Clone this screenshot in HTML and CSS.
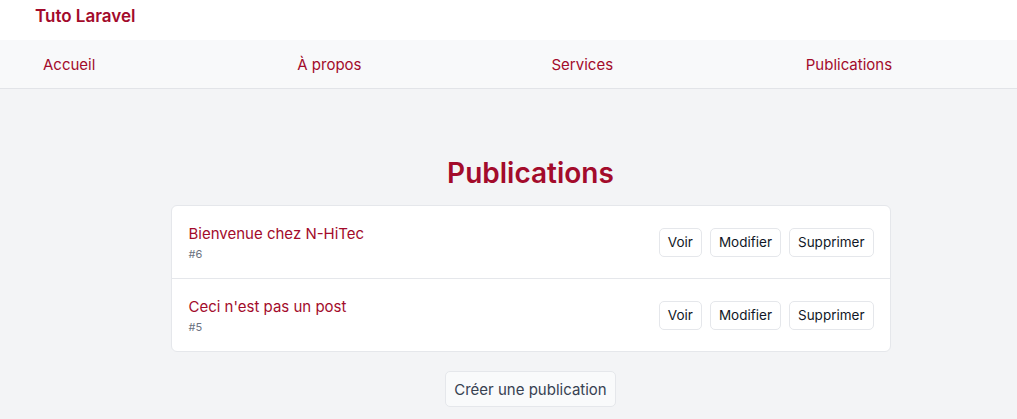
FILE: index.html
```html
<!DOCTYPE html>
<html lang="fr">
<head>
<meta charset="utf-8">
<title>Publications</title>
<link rel="stylesheet" href="styles.css">
</head>
<body>
<header class="brand-bar">
  <a class="brand" href="#">Tuto Laravel</a>
</header>
<nav class="nav">
  <div class="nav-item"><a href="#">Accueil</a></div>
  <div class="nav-item"><a href="#">À propos</a></div>
  <div class="nav-item"><a href="#">Services</a></div>
  <div class="nav-item"><a href="#">Publications</a></div>
</nav>
<main class="main">
  <h1 class="title">Publications</h1>
  <ul class="card">
    <li class="row">
      <div class="row-info">
        <a class="row-title" href="#">Bienvenue chez N-HiTec</a>
        <span class="row-id">#6</span>
      </div>
      <div class="actions">
        <button class="btn">Voir</button>
        <button class="btn">Modifier</button>
        <button class="btn">Supprimer</button>
      </div>
    </li>
    <li class="row">
      <div class="row-info">
        <a class="row-title" href="#">Ceci n'est pas un post</a>
        <span class="row-id">#5</span>
      </div>
      <div class="actions">
        <button class="btn">Voir</button>
        <button class="btn">Modifier</button>
        <button class="btn">Supprimer</button>
      </div>
    </li>
  </ul>
  <button class="create">Créer une publication</button>
</main>
</body>
</html>
```

FILE: styles.css
```css
* { box-sizing: border-box; }
html, body { margin: 0; padding: 0; }
body {
  font-family: Inter, "Noto Sans", sans-serif;
  background: #f3f4f6;
  color: #111827;
  min-height: 419px;
}
a { text-decoration: none; }
.brand-bar {
  background: #ffffff;
  height: 40px;
  padding-left: 35px;
  display: flex;
  align-items: center;
}
.brand {
  color: #a30b2b;
  font-weight: 600;
  font-size: 17px;
  margin-top: -9px;
}
.nav {
  display: grid;
  grid-template-columns: repeat(4, 1fr);
  height: 49px;
  background: #f8f9fa;
  border-bottom: 1px solid #e2e4e8;
  align-items: center;
}
.nav-item { padding-left: 43px; }
.nav-item a {
  color: #a30b2b;
  font-size: 15px;
}
.main {
  padding-left: 44px;
  padding-top: 67px;
  display: flex;
  flex-direction: column;
  align-items: center;
}
.title {
  margin: 0;
  color: #a30b2b;
  font-size: 28px;
  font-weight: 600;
  line-height: 34px;
}
.card {
  list-style: none;
  margin: 15px 0 0;
  padding: 0;
  width: 720px;
  background: #fff;
  border: 1px solid #e5e7eb;
  border-radius: 6px;
}
.row {
  display: flex;
  justify-content: space-between;
  align-items: center;
  height: 72px;
  padding: 0 16px 0 17px;
}
.row + .row { border-top: 1px solid #e5e7eb; height: 73px; }
.row-info { display: flex; flex-direction: column; padding-top: 2px; }
.row-title {
  color: #a30b2b;
  font-size: 15px;
  line-height: 20px;
}
.row-id {
  color: #6b7280;
  font-size: 11px;
  line-height: 16px;
  margin-top: 2px;
}
.actions { display: flex; gap: 8px; }
.btn {
  font-family: inherit;
  font-size: 13.5px;
  color: #111827;
  background: #fff;
  border: 1px solid #e5e7eb;
  border-radius: 5px;
  height: 29px;
  padding: 0 8px;
}
.create {
  margin-top: 19px;
  font-family: inherit;
  font-size: 15px;
  color: #374151;
  background: #f9fafb;
  border: 1px solid #e5e7eb;
  border-radius: 5px;
  height: 36px;
  padding: 0 8px;
}
```
